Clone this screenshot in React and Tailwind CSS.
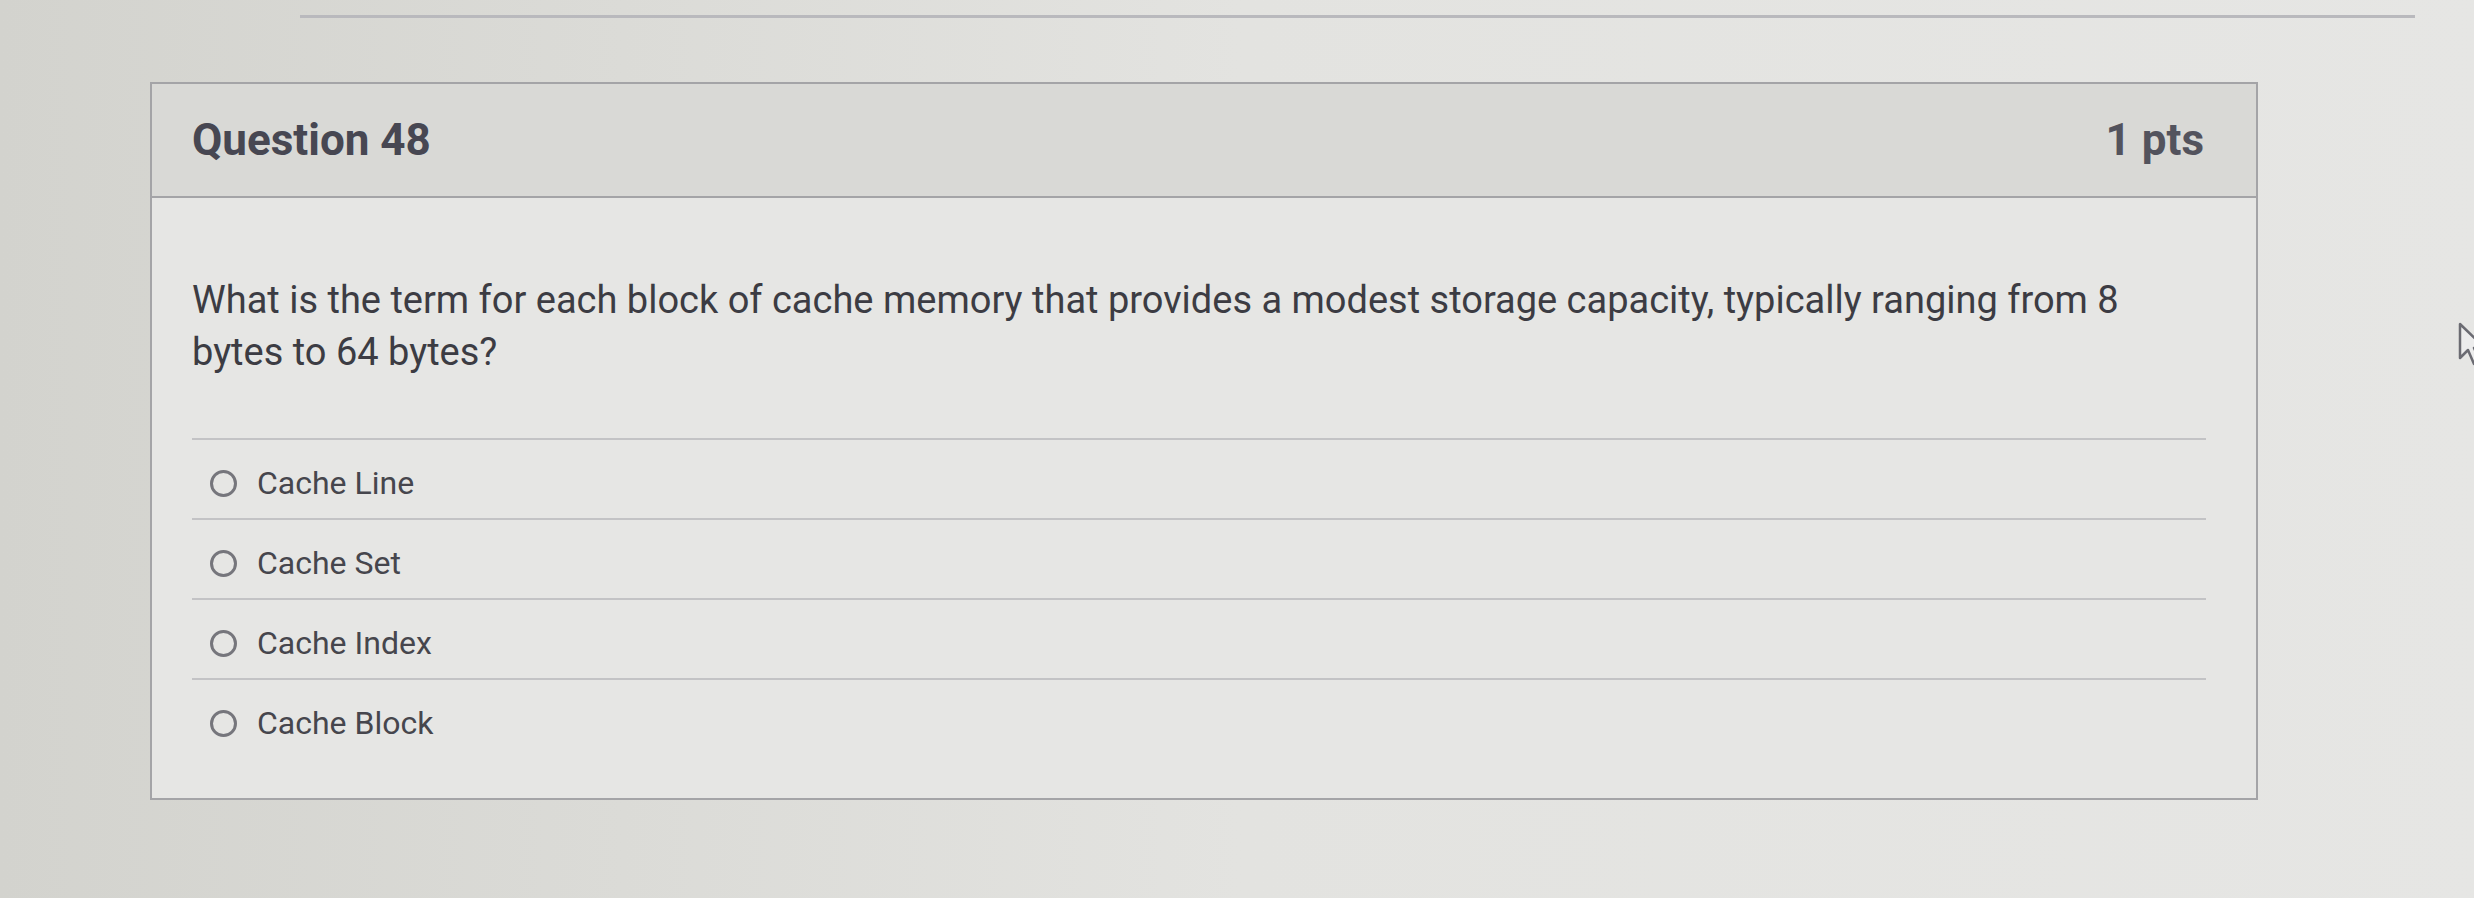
export default function App() {
  const options = ["Cache Line", "Cache Set", "Cache Index", "Cache Block"];
  return (
    <div className="relative h-[898px] w-full overflow-hidden bg-linear-to-r from-[#d3d3ce] via-[#e3e3e0] to-[#e6e6e4] font-['Roboto','Liberation_Sans',sans-serif]">
      <div className="ml-[300px] mt-[15px] h-[3px] w-[2115px] bg-[#b9b9bd]" />
      <div className="ml-[150px] mt-[64px] w-[2108px] border-2 border-[#a4a4a7] bg-[#e6e6e4]">
        <div className="flex h-[114px] items-center justify-between border-b-2 border-[#a4a4a7] bg-[#d9d9d6] pl-[40px] pr-[52px]">
          <h2 className="text-[44px] font-bold text-[#474752]">Question 48</h2>
          <span className="text-[44px] font-bold text-[#53535d]">1 pts</span>
        </div>
        <div className="pl-[40px] pr-[50px] pt-[76px] pb-[40px]">
          <p className="max-w-[1995px] text-[38px] leading-[52px] text-[#3c3c43]">
            What is the term for each block of cache memory that provides a modest storage capacity, typically ranging from 8 bytes to 64 bytes?
          </p>
          <div className="mt-[60px]">
            {options.map((o) => (
              <div
                key={o}
                className="flex h-[80px] items-center gap-[20px] border-t-2 border-[#c3c3c5] pl-[18px] pt-[8px]"
              >
                <span className="h-[27px] w-[27px] shrink-0 rounded-full border-[3px] border-[#76767c]" />
                <span className="text-[32px] text-[#46464d]">{o}</span>
              </div>
            ))}
          </div>
        </div>
      </div>
      <svg
        className="absolute left-[2458px] top-[322px]"
        width="30"
        height="46"
        viewBox="0 0 30 46"
      >
        <path
          d="M2 2 L2 36 L10 28 L16 42 L22 39 L16 26 L27 26 Z"
          fill="#ececec"
          stroke="#6b6b72"
          strokeWidth="2.5"
          strokeLinejoin="round"
        />
      </svg>
    </div>
  );
}
